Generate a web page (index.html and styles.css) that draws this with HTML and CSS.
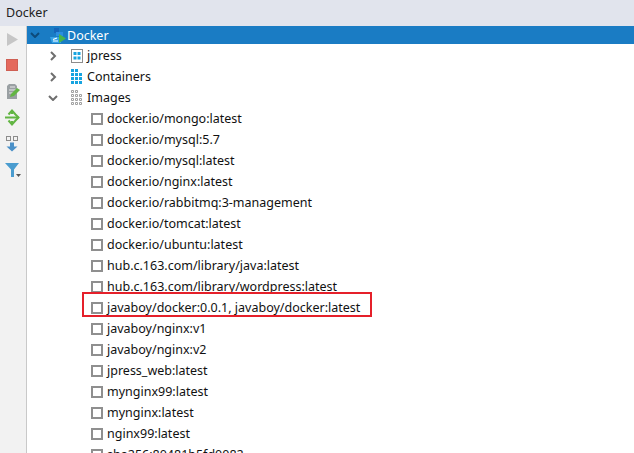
FILE: index.html
```html
<!DOCTYPE html>
<html lang="en">
<head>
<meta charset="utf-8">
<title>Docker</title>
<link rel="stylesheet" href="styles.css">
</head>
<body>
<div class="app">
  <header class="titlebar">Docker</header>
  <div class="main">
    <aside class="toolbar">
      <svg class="tool" width="20" height="20" viewBox="0 0 20 20"><path d="M4 4 L15 10.500 L4 17 Z" fill="#c6c6c6"/></svg>
      <svg class="tool" width="20" height="20" viewBox="0 0 20 20"><rect x="3.500" y="4.500" width="11" height="11" fill="#e4695c" stroke="#cf5f54"/></svg>
      <svg class="tool" width="20" height="20" viewBox="0 0 20 20"><path d="M6 3h6l2 2v13H4V5z" fill="#9aa0a3"/><path d="M7 6h5M6 9h7M6 12h4" stroke="#e8e8e8"/><path d="M7 16l1-3 6-6 3 2-6 6z" fill="#62b543"/></svg>
      <svg class="tool" width="20" height="20" viewBox="0 0 20 20"><path d="M2 10.500h14" stroke="#62b543" stroke-width="2"/><path d="M5.500 7.500L9 3.500l3.500 4M9 4v3M5.500 13.500l3.500 4 3.500-4M9 14v3M12 7l3.500 3.500L12 14" fill="none" stroke="#62b543" stroke-width="2"/></svg>
      <svg class="tool" width="20" height="20" viewBox="0 0 20 20"><rect x="3.500" y="3.500" width="4" height="4" fill="none" stroke="#8c8c8c"/><rect x="10.500" y="3.500" width="4" height="4" fill="none" stroke="#8c8c8c"/><path d="M7 9.500h4v4h3.500L9 18.500 3.500 13.500H7z" fill="#4a90c8"/></svg>
      <svg class="tool" width="20" height="20" viewBox="0 0 20 20"><path d="M2 4h14L11 10.500V18H8v-7.500z" fill="#4a9ccf"/><path d="M13 15h5l-2.500 3z" fill="#555"/></svg>
    </aside>
    <div class="tree">
      <div class="row row-selected">
        <svg class="twisty" width="10" height="6" viewBox="0 0 10 6"><path d="M1 1l4 4 4-4" fill="none" stroke="#0d4a7a" stroke-width="2"/></svg>
        <svg class="docker-icon" width="16" height="15" viewBox="0 0 16 15"><rect x="4" y="0" width="5" height="5" fill="#1565b8"/><rect x="6" y="4" width="7" height="4" fill="#2b8ee0"/><path d="M0 9h11v6H2z" fill="#35a3e8"/><path d="M3 11.500l4-1.500M3 13h5" stroke="#fff" stroke-width="1.200"/><path d="M9 6l7 4.500L9 15z" fill="#49b54a"/></svg>
        <span>Docker</span>
      </div>
      <div class="row">
        <svg class="twisty" width="6" height="10" viewBox="0 0 6 10"><path d="M1 1l4 4-4 4" fill="none" stroke="#6e6e6e" stroke-width="2"/></svg>
        <svg class="node-icon" width="12" height="14" viewBox="0 0 12 14"><rect x=".5" y=".5" width="11" height="13" fill="#fff" stroke="#8c8c8c"/><rect x="2.500" y="3" width="3" height="3" fill="#16a4e0"/><rect x="6.500" y="3" width="3" height="3" fill="#16a4e0"/><rect x="2.500" y="7.500" width="3" height="3" fill="#16a4e0"/><rect x="6.500" y="7.500" width="3" height="3" fill="#16a4e0"/></svg>
        <span>jpress</span>
      </div>
      <div class="row">
        <svg class="twisty" width="6" height="10" viewBox="0 0 6 10"><path d="M1 1l4 4-4 4" fill="none" stroke="#6e6e6e" stroke-width="2"/></svg>
        <svg class="node-icon" width="12" height="16" viewBox="0 0 12 16"><path d="M0 0h3v3H0zM4 0h3v3H4zM0 4h3v3H0zM4 4h3v3H4zM8 4h3v3H8zM0 8h3v3H0zM4 8h3v3H4zM8 8h3v3H8zM0 12h3v3H0zM4 12h3v3H4zM8 12h3v3H8z" fill="#16a4e0"/></svg>
        <span>Containers</span>
      </div>
      <div class="row">
        <svg class="twisty" width="10" height="6" viewBox="0 0 10 6"><path d="M1 1l4 4 4-4" fill="none" stroke="#6e6e6e" stroke-width="2"/></svg>
        <svg class="node-icon" width="12" height="16" viewBox="0 0 12 16"><path d="M.5.5h2v2h-2zM4.500.5h2v2h-2zM.5 4.500h2v2h-2zM4.500 4.500h2v2h-2zM8.500 4.500h2v2h-2zM.5 8.500h2v2h-2zM4.500 8.500h2v2h-2zM8.500 8.500h2v2h-2zM.5 12.500h2v2h-2zM4.500 12.500h2v2h-2zM8.500 12.500h2v2h-2z" fill="none" stroke="#a0a0a0"/></svg>
        <span>Images</span>
      </div>
      <div class="row image"><i class="box"></i><span>docker.io/mongo:latest</span></div>
      <div class="row image"><i class="box"></i><span>docker.io/mysql:5.7</span></div>
      <div class="row image"><i class="box"></i><span>docker.io/mysql:latest</span></div>
      <div class="row image"><i class="box"></i><span>docker.io/nginx:latest</span></div>
      <div class="row image"><i class="box"></i><span>docker.io/rabbitmq:3-management</span></div>
      <div class="row image"><i class="box"></i><span>docker.io/tomcat:latest</span></div>
      <div class="row image"><i class="box"></i><span>docker.io/ubuntu:latest</span></div>
      <div class="row image"><i class="box"></i><span>hub.c.163.com/library/java:latest</span></div>
      <div class="row image"><i class="box"></i><span>hub.c.163.com/library/wordpress:latest</span></div>
      <div class="row image"><i class="box"></i><span>javaboy/docker:0.0.1, javaboy/docker:latest</span><div class="highlight"></div></div>
      <div class="row image"><i class="box"></i><span>javaboy/nginx:v1</span></div>
      <div class="row image"><i class="box"></i><span>javaboy/nginx:v2</span></div>
      <div class="row image"><i class="box"></i><span>jpress_web:latest</span></div>
      <div class="row image"><i class="box"></i><span>mynginx99:latest</span></div>
      <div class="row image"><i class="box"></i><span>mynginx:latest</span></div>
      <div class="row image"><i class="box"></i><span>nginx99:latest</span></div>
      <div class="row image"><i class="box"></i><span>sha256:80481b5fd0082</span></div>
    </div>
  </div>
</div>
</body>
</html>
```
FILE: styles.css
```css
html, body {
  margin: 0;
  padding: 0;
  height: 100%;
  overflow: hidden;
  background: #fff;
}
.app {
  width: 634px;
  height: 453px;
  display: flex;
  flex-direction: column;
  overflow: hidden;
  font-family: "Noto Sans", "Open Sans", sans-serif;
  font-size: 12.5px;
  color: #111;
}
.titlebar {
  flex: 0 0 26px;
  height: 26px;
  line-height: 26px;
  padding-left: 6px;
  background: #e1e4ed;
  color: #222;
}
.main {
  flex: 1;
  display: flex;
  min-height: 0;
}
.toolbar {
  flex: 0 0 27px;
  box-sizing: border-box;
  background: #f2f2f2;
  border-right: 1px solid #c9c9c9;
  display: flex;
  flex-direction: column;
  align-items: flex-start;
  padding: 3px 0 0 3px;
  gap: 6px;
}
.tool {
  display: block;
}
.tree {
  flex: 1;
  min-width: 0;
}
.row {
  position: relative;
  height: 21px;
  line-height: 21px;
  display: flex;
  align-items: center;
  white-space: nowrap;
  padding-left: 21px;
}
.row > .twisty {
  flex: 0 0 10px;
}
.row > .node-icon {
  flex: none;
  margin-left: 13px;
  margin-right: 4px;
}
.row-selected {
  height: 18px;
  margin-bottom: 1px;
  padding-left: 3px;
  background: #1a7cc4;
  color: #fff;
}
.row-selected > .docker-icon {
  flex: none;
  margin-left: 10px;
  margin-right: 1px;
}
.image {
  padding-left: 64px;
}
.box {
  flex: none;
  box-sizing: border-box;
  width: 12px;
  height: 12px;
  border: 2px solid #8f8f8f;
  margin-right: 4px;
}
.highlight {
  position: absolute;
  left: 55px;
  top: -5px;
  width: 290px;
  height: 25px;
  box-sizing: border-box;
  border: 2px solid #e5202a;
}
```
